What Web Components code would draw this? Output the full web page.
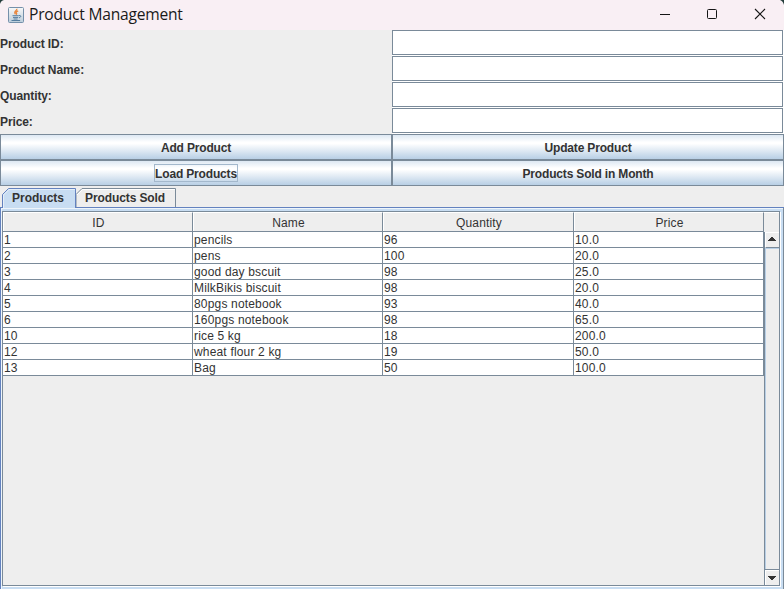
<!DOCTYPE html>
<html lang="en">
<head>
<meta charset="utf-8">
<title>Product Management</title>
<style>
html,body{margin:0;width:784px;height:589px;overflow:hidden;background:#eee}
body{font:12px "Liberation Sans",Arial,sans-serif;color:#333}
</style>
</head>
<body>
<product-window></product-window>
<script>
class Base extends HTMLElement {
  constructor(){ super(); this.attachShadow({mode:'open'}); }
  connectedCallback(){ this.shadowRoot.innerHTML = `<style>*{box-sizing:border-box}${this.css()}</style>${this.html()}`; }
}

customElements.define('title-bar', class extends Base {
  css(){ return `
    :host{display:flex;align-items:center;height:30px;background:#f9eff4;color:#1a1a1a;position:relative;overflow:hidden}
    .logo{margin-left:8px;margin-right:5px;flex:none}
    .t{font:15.6px/29px "Open Sans","Noto Sans",sans-serif;letter-spacing:-.23px;width:155px;white-space:nowrap;height:30px}
    .c{margin-left:auto;flex:none}
    .k{position:absolute;top:0;left:0}`; }
  html(){ return `
    <svg class="logo" width="16" height="16" viewBox="0 0 16 16">
      <defs><linearGradient id="g" x1="0" y1="0" x2="0" y2="1"><stop offset="0" stop-color="#f8f8f8"/><stop offset="1" stop-color="#bccddb"/></linearGradient></defs>
      <rect x=".5" y=".5" width="15" height="15" rx="1" fill="url(#g)" stroke="#7590aa"/>
      <path d="M8.8 1.8C9.4 3.6 5 4.4 7.4 7.2M10.2 3.9C7.8 5 8 5.5 8.6 6.3 9 7 8.3 7.4 8 7.7" fill="none" stroke="#e8873f" stroke-width="1.3"/>
      <path d="M4.5 8.7h6.3M5 10.4h5.2M5.6 12h4M11 8.6c2.4-.6 2.4 1.6 0 2.2M3.5 13.5h8.6" fill="none" stroke="#557d9f"/>
    </svg>
    <span class="t"><slot></slot></span>
    <svg class="c" width="144" height="30" fill="none" stroke="#151515">
      <path d="M20 14.5h10"/><rect x="67.5" y="9.5" width="9" height="9" rx="1"/><path d="M115 9l10 10M125 9l-10 10" stroke-width="1.1"/>
    </svg>
    <svg class="k" width="784" height="8"><path d="M0 0h4Q1 .5 0 4zM784 0h-4q3 1 4 5z" fill="#243d3b"/></svg>`; }
});

customElements.define('form-row', class extends Base {
  css(){ return `
    :host{display:grid;grid-template-columns:392px 392px;height:26px;font-weight:bold}
    span{line-height:28px;height:26px;letter-spacing:-.1px}
    .f{background:#fff;padding:0 1px 1px 0}
    .b{height:25px;border:1px solid #7a8a99}`; }
  html(){ return `<span><slot></slot></span><div class="f"><div class="b"></div></div>`; }
});

customElements.define('metal-button', class extends Base {
  css(){ return `
    :host{display:flex;align-items:center;justify-content:center;height:26px;box-sizing:border-box;border:1px solid #7a8a99;font-weight:bold;
      background:linear-gradient(#dde8f3 0,#fff 30%,#fff 36%,#b8cfe5 100%)}
    span{height:18px;line-height:18px;border:1px solid transparent;letter-spacing:-.17px}
    :host([focused]) span{border-color:#a3b8cc}`; }
  html(){ return `<span><slot></slot></span>`; }
});

customElements.define('metal-tabs', class extends Base {
  css(){ return `
    :host{display:flex;height:22px;padding:2px 0 0 2px;font-weight:bold;background:linear-gradient(#eee,#eee) 0 0/100% 21px no-repeat,#6382bf}
    .tab{position:relative;width:74px;height:20px;flex:none}
    .tab.two{width:100px}
    svg{display:block}
    .l{position:absolute;inset:0;line-height:20px;padding-left:10px;white-space:nowrap}
    .two .l{padding-left:9px;letter-spacing:-.1px}`; }
  html(){ return `
    <div class="tab"><svg width="74" height="20"><path d="M.5 20V6.5L6.5.5H73.5V20" fill="#c8ddf2" stroke="#6382bf"/><path d="M1.5 20V7L7 1.5H73" fill="none" stroke="#e5eff9"/></svg><div class="l">Products</div></div>
    <div class="tab two"><svg width="100" height="20"><path d="M0 6.5L6 .5H99.5V19.5H0z" fill="#eee" stroke="#7a8a99"/><path d="M1 7L6.5 1.5H99" fill="none" stroke="#fff"/><path d="M0 19.5H100" stroke="#6382bf"/></svg><div class="l">Products Sold</div></div>`; }
});

customElements.define('data-table', class extends Base {
  css(){ return `
    :host{display:grid;grid-template-columns:190px 190px 191px 190px;grid-template-rows:20px;grid-auto-rows:16px;align-content:start}
    div{border-right:1px solid #7a8a99;border-bottom:1px solid #7a8a99;background:#fff;padding-left:1px;line-height:16px;white-space:nowrap;letter-spacing:.17px}
    .h{background:#eee;text-align:center;line-height:21px;border-top:1px solid #fff;padding:0 0 0 2px;box-shadow:inset 1px 0 #fff}`; }
  html(){
    const rows=[['1','pencils','96','10.0'],['2','pens','100','20.0'],['3','good day bscuit','98','25.0'],['4','MilkBikis biscuit','98','20.0'],['5','80pgs notebook','93','40.0'],['6','160pgs notebook','98','65.0'],['10','rice 5 kg','18','200.0'],['12','wheat flour 2 kg','19','50.0'],['13','Bag','50','100.0']];
    return ['ID','Name','Quantity','Price'].map(t=>`<div class="h">${t}</div>`).join('')+rows.flat().map(t=>`<div>${t}</div>`).join('');
  }
});

customElements.define('scroll-bar', class extends Base {
  css(){ return `
    :host{display:flex;flex-direction:column;width:15px}
    .corner{height:20px;background:#eee;border-top:1px solid #fff}
    .bar{flex:1;display:flex;flex-direction:column;border-left:1px solid #7a8a99;background:#eee}
    .a{height:16px;border:1px solid #fff;border-right:0;border-bottom:1px solid #7a8a99;background:#eee}
    .track{flex:1;border-left:1px solid #b8cfe5;border-top:1px solid #b8cfe5}
    .d{border-top:1px solid #7a8a99;box-shadow:inset 1px 1px #fff;border-left:0;border-bottom:0}
    svg{display:block}`; }
  html(){ return `<div class="corner"></div><div class="bar">
    <div class="a"><svg width="13" height="14"><path d="M2 8h8v-1h-1v-1h-1v-1h-1v-1h-2v1h-1v1h-1v1h-1z" fill="#333"/></svg></div>
    <div class="track"></div>
    <div class="a d"><svg width="14" height="14"><path d="M3 6h8v1h-1v1h-1v1h-1v1h-2v-1h-1v-1h-1v-1h-1z" fill="#333"/></svg></div></div>`; }
});

customElements.define('tab-panel', class extends Base {
  css(){ return `
    :host{display:block;height:381px;background:#c8ddf2;padding:3px 3px 3px 2px;border-left:1px solid #6382bf;border-right:1px solid #7a8a99;box-shadow:inset 1px 1px #eef5fb}
    .s{height:375px;display:flex;border:1px solid #7a8a99;background:#eee;box-shadow:1px 1px #fff;margin-left:-1px}
    data-table{flex:none;width:761px}
    scroll-bar{flex:none}`; }
  html(){ return `<div class="s"><data-table></data-table><scroll-bar></scroll-bar></div>`; }
});

customElements.define('product-window', class extends Base {
  css(){ return `
    :host{display:flex;flex-direction:column;width:784px;height:589px;background:#eee}
    .b{display:grid;grid-template-columns:392px 392px}
    title-bar,form-row,.b,metal-tabs,tab-panel{flex:none}
    tab-panel{box-sizing:border-box}
    metal-tabs{box-sizing:border-box}`; }
  html(){ return `
    <title-bar>Product Management</title-bar>
    <form-row>Product ID:</form-row><form-row>Product Name:</form-row><form-row>Quantity:</form-row><form-row>Price:</form-row>
    <div class="b"><metal-button>Add Product</metal-button><metal-button>Update Product</metal-button>
    <metal-button focused>Load Products</metal-button><metal-button>Products Sold in Month</metal-button></div>
    <metal-tabs></metal-tabs><tab-panel></tab-panel>`; }
});
</script>
</body>
</html>
